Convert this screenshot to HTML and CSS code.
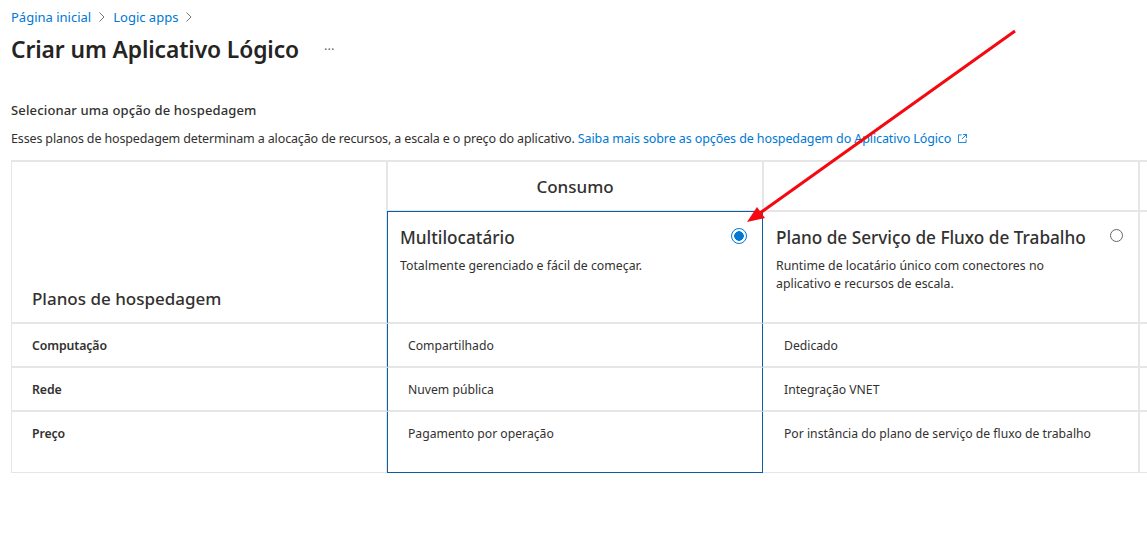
FILE: index.html
```html
<!DOCTYPE html>
<html lang="pt">
<head>
<meta charset="utf-8">
<title>Criar um Aplicativo Lógico</title>
<link rel="stylesheet" href="styles.css">
</head>
<body>
<nav class="crumbs">
  <a href="#">Página inicial</a>
  <svg class="chev" viewBox="0 0 8 12"><path d="M1.500 1.500 6 6l-4.500 4.500"/></svg>
  <a href="#">Logic apps</a>
  <svg class="chev" viewBox="0 0 8 12"><path d="M1.500 1.500 6 6l-4.500 4.500"/></svg>
</nav>
<header class="title-row">
  <h1>Criar um Aplicativo Lógico</h1>
  <span class="more">···</span>
</header>
<h2 class="section">Selecionar uma opção de hospedagem</h2>
<p class="intro">Esses planos de hospedagem determinam a alocação de recursos, a escala e o preço do aplicativo. <a href="#">Saiba mais sobre as opções de hospedagem do Aplicativo Lógico <svg class="ext" viewBox="0 0 10 10"><path d="M4 1H.5v8.500h8.500V6M5.500.5h4v4M9.500.5 4.500 5.500"/></svg></a></p>
<div class="plans">
  <div class="cell plans-label">Planos de hospedagem</div>
  <div class="cell group">Consumo</div>
  <div class="cell group-empty"></div>
  <div class="cell edge"></div>

  <div class="cell option sel top">
    <div class="opt-head"><h3>Multilocatário</h3><span class="radio on"></span></div>
    <p>Totalmente gerenciado e fácil de começar.</p>
  </div>
  <div class="cell option">
    <div class="opt-head"><h3>Plano de Serviço de Fluxo de Trabalho</h3><span class="radio"></span></div>
    <p>Runtime de locatário único com conectores no aplicativo e recursos de escala.</p>
  </div>
  <div class="cell edge"></div>

  <div class="cell row-name">Computação</div>
  <div class="cell val sel">Compartilhado</div>
  <div class="cell val">Dedicado</div>
  <div class="cell edge"></div>

  <div class="cell row-name">Rede</div>
  <div class="cell val sel">Nuvem pública</div>
  <div class="cell val">Integração VNET</div>
  <div class="cell edge"></div>

  <div class="cell row-name last">Preço</div>
  <div class="cell val sel bottom last">Pagamento por operação</div>
  <div class="cell val last">Por instância do plano de serviço de fluxo de trabalho</div>
  <div class="cell edge last"></div>
</div>
<svg class="arrow" viewBox="0 0 1147 538"><line x1="1015" y1="31" x2="760" y2="213"/><polygon points="747,222 757,207 765,218"/></svg>
</body>
</html>
```
FILE: styles.css
```css
html, body { margin: 0; height: 538px; overflow: hidden; background: #fff; }
body { position: relative; padding: 8px 0 0 11px; box-sizing: border-box; font-family: "Noto Sans", "Open Sans", sans-serif; font-size: 12px; color: #323130; }
a { color: #0078d4; text-decoration: none; }
.crumbs { display: flex; align-items: center; height: 18px; font-size: 13px; }
.chev { width: 8px; height: 12px; margin: 0 7px 0 7px; fill: none; stroke: #777; stroke-width: 1; }
.title-row { display: flex; align-items: center; margin-top: 6px; height: 34px; }
h1 { margin: 0; font-size: 22.800px; font-weight: 600; color: #252423; letter-spacing: -.1px; }
.more { margin-left: 25px; color: #666; font-size: 13px; }
.section { margin: 35px 0 0; font-size: 13px; line-height: 18px; font-weight: 500; letter-spacing: .15px; }
.intro { margin: 11px 0 0; line-height: 18px; font-size: 12.500px; letter-spacing: -.14px; white-space: nowrap; }
.intro a { letter-spacing: -.1px; }
.ext { width: 9px; height: 9px; margin-left: 4px; fill: none; stroke: #0078d4; stroke-width: 1; }
.plans { display: grid; grid-template-columns: 376px 376px 376px 40px; grid-template-rows: 50px 112px 44px 44px 61px; margin-top: 12px; width: 1168px; border-top: 2px solid #e6e6e6; border-left: 1px solid #e6e6e6; box-sizing: border-box; }
.cell { box-sizing: border-box; border-right: 2px solid #e6e6e6; border-bottom: 2px solid #e6e6e6; }
.cell.last { border-bottom-width: 1px; }
.group { display: flex; align-items: center; justify-content: center; font-size: 17px; font-weight: 500; color: #323130; }
.plans-label { grid-row: span 2; display: flex; align-items: flex-end; padding: 0 0 12px 20px; font-size: 17px; font-weight: 500; }
.option { padding: 14px 16px 0 12px; }
.opt-head { display: flex; justify-content: space-between; align-items: flex-start; }
h3 { margin: 0; font-size: 17.200px; line-height: 24px; font-weight: 500; }
.option p { margin: 7px 0 0; font-size: 12.300px; line-height: 18px; max-width: 300px; }
.radio { flex: none; box-sizing: border-box; width: 13px; height: 13px; margin: 3px -1px 0 0; border: 1px solid #666; border-radius: 50%; }
.radio.on { width: 16px; height: 16px; margin: 2px -1px 0 0; border-color: #0078d4; background: radial-gradient(circle, #0078d4 0 4.500px, #fff 5px); }
.row-name { padding: 13px 0 0 20px; font-size: 12.300px; line-height: 18px; font-weight: 600; letter-spacing: -.1px; }
.val { padding: 13px 0 0 20px; font-size: 12.200px; line-height: 18px; }
.sel { border-left: 1px solid #0b5ea5; border-right: 1px solid #0b5ea5; margin: 0 1px 0 -1px; }
.sel + .cell { margin-left: -1px; padding-left: 21px; }
.option.sel + .option { padding-left: 13px; }
.top { border-top: 1px solid #0b5ea5; margin-top: -1px; }
.bottom { border-bottom: 1px solid #0b5ea5; }
.arrow { position: absolute; left: 0; top: 0; width: 1147px; height: 538px; pointer-events: none; }
.arrow line { stroke: #f50810; stroke-width: 3; }
.arrow polygon { fill: #f50810; }
```
